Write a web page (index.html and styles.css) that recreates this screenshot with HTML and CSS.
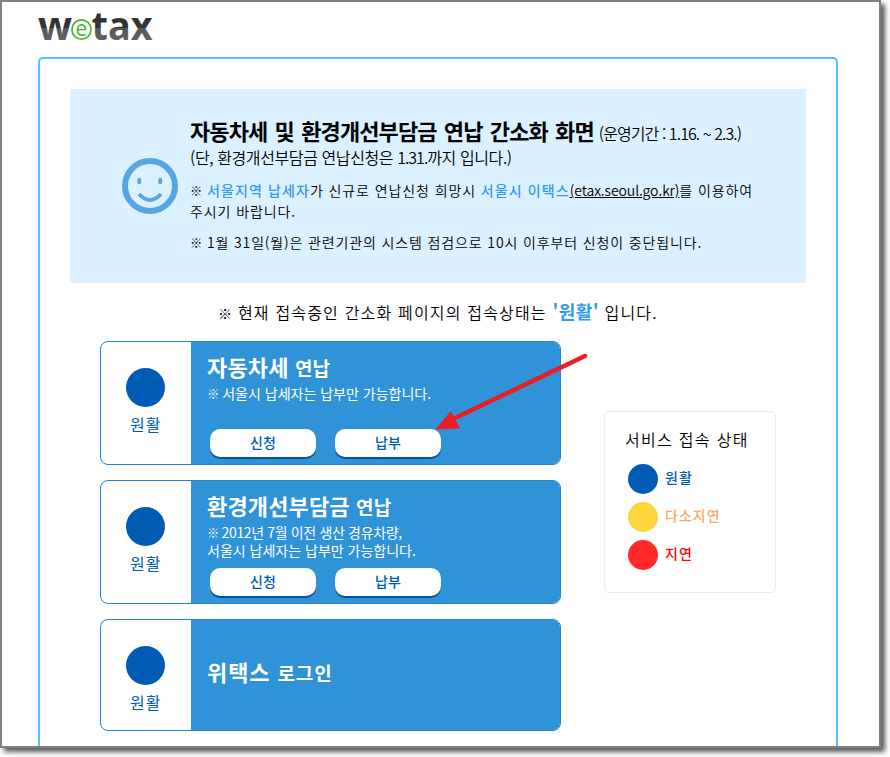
FILE: index.html
```html
<!DOCTYPE html>
<html lang="ko">
<head>
<meta charset="utf-8">
<title>wetax</title>
<link rel="stylesheet" href="styles.css">
</head>
<body>
<div class="window">
  <header class="header">
    <svg class="logo" width="118" height="48" viewBox="0 -6 118 48" role="img" aria-label="wetax">
      <defs>
        <linearGradient id="ink" gradientUnits="userSpaceOnUse" x1="0" y1="0" x2="0" y2="36">
          <stop offset="0" stop-color="#303030"/><stop offset=".55" stop-color="#353535"/>
          <stop offset=".55" stop-color="#555"/><stop offset="1" stop-color="#666"/>
        </linearGradient>
      </defs>
      <g class="logo-ink" fill="url(#ink)">
        <text x="1" y="32" textLength="34" lengthAdjust="spacingAndGlyphs">w</text>
        <text x="54.500" y="32" textLength="61" lengthAdjust="spacingAndGlyphs">tax</text>
      </g>
      <circle cx="44.500" cy="21.500" r="9.600" fill="#fff" stroke="#4db233" stroke-width="1.700"/>
      <text class="logo-e" x="44.500" y="27.500" text-anchor="middle">e</text>
    </svg>
  </header>
  <main class="frame">
    <section class="banner">
      <svg class="smile" width="56" height="56" viewBox="0 0 56 56" fill="none" stroke="#56a7e1">
        <circle cx="28" cy="28" r="25" stroke-width="6"/>
        <path d="M17.300 21.800v2.500M38.200 21.800v2.500" stroke-width="4" stroke-linecap="round"/>
        <path d="M17 36Q28 48 39 36" stroke-width="4"/>
      </svg>
      <div class="banner-text">
        <h1><span class="main">자동차세 및 환경개선부담금 연납 간소화 화면</span><span class="period">(운영기간 : 1.16. ~ 2.3.)</span></h1>
        <p class="limit">(단, 환경개선부담금 연납신청은 <span class="num">1.31.</span>까지 입니다.)</p>
        <p class="note"><span class="mark">※</span> <b>서울지역 납세자</b>가 신규로 연납신청 희망시 <b>서울시 이택스</b><u>(etax.seoul.go.kr)</u>를 이용하여<br>주시기 바랍니다.</p>
        <p class="note system"><span class="mark">※</span> 1월 31일(월)은 관련기관의 시스템 점검으로 10시 이후부터 신청이 중단됩니다.</p>
      </div>
    </section>
    <p class="status"><span class="mark">※</span> 현재 접속중인 간소화 페이지의 접속상태는 <b>'원활'</b> 입니다.</p>
    <div class="columns">
      <div class="cards">
        <article class="card">
          <div class="state"><i class="dot"></i><span>원활</span></div>
          <div class="body">
            <h2>자동차세 <small>연납</small></h2>
            <p><span class="mark">※</span> 서울시 납세자는 납부만 가능합니다.</p>
            <div class="actions"><button>신청</button><button>납부</button></div>
          </div>
        </article>
        <article class="card">
          <div class="state"><i class="dot"></i><span>원활</span></div>
          <div class="body">
            <h2>환경개선부담금 <small>연납</small></h2>
            <p><span class="year"><span class="mark">※</span> 2012년 7월 이전 생산 경유차량,</span><br>서울시 납세자는 납부만 가능합니다.</p>
            <div class="actions"><button>신청</button><button>납부</button></div>
          </div>
        </article>
        <article class="card login">
          <div class="state"><i class="dot"></i><span>원활</span></div>
          <div class="body"><h2>위택스 <small>로그인</small></h2></div>
        </article>
      </div>
      <aside class="legend">
        <h3>서비스 접속 상태</h3>
        <ul>
          <li class="good"><i></i><span>원활</span></li>
          <li class="slow"><i></i><span>다소지연</span></li>
          <li class="late"><i></i><span>지연</span></li>
        </ul>
      </aside>
    </div>
  </main>
  <svg class="arrow" width="160" height="84" viewBox="0 0 160 84">
    <path d="M152 6 20 69" stroke="#ed1c24" stroke-width="4.400" stroke-linecap="round"/>
    <path d="M2 79.500 18 61 27 78.500z" fill="#ed1c24"/>
  </svg>
</div>
</body>
</html>
```
FILE: styles.css
```css
* { box-sizing: border-box; margin: 0; padding: 0; }
html { overflow: hidden; }
body {
  width: 890px;
  height: 757px;
  background: #fff;
  color: #000;
  font-family: "Noto Sans CJK KR", sans-serif;
  overflow: hidden;
}
.window {
  position: relative;
  width: 881px;
  height: 748px;
  border: 2px solid #808080;
  background: #fff;
  box-shadow: 4px 4px 5px rgba(0, 0, 0, .65);
}
.header { height: 55px; padding-left: 35px; }
.logo { display: block; overflow: visible; }
.logo-ink { font: 700 40px "Open Sans", sans-serif; }
.logo-e { font: 400 21px "Open Sans", sans-serif; fill: #4db233; }
.frame {
  width: 800px;
  height: 689px;
  margin-left: 36px;
  padding: 30px 30px 0;
  border: 2px solid #56c1fc;
  border-bottom: 0;
  border-radius: 5px 5px 0 0;
}
.banner {
  display: flex;
  height: 194px;
  width: 736px;
  padding: 28px 0 0 52px;
  gap: 12px;
  background: #dbf1ff;
}
.smile { margin-top: 41px; flex: none; }
.banner-text { white-space: nowrap; }
h1 { display: flex; gap: 5px; height: 27px; line-height: 27px; font-weight: 400; }
.main { font-size: 22px; font-weight: 700; letter-spacing: -.9px; word-spacing: 2px; }
.period { font-size: 16px; font-weight: 350; letter-spacing: -.92px; line-height: 32px; }
.limit { font-size: 16px; font-weight: 350; line-height: 26px; letter-spacing: -.4px; }
.num { letter-spacing: -1px; }
.mark { font-size: .88em; line-height: 1; margin-right: -1px; }
.note { margin-top: 10px; font-size: 14px; font-weight: 350; line-height: 21px; letter-spacing: .9px; }
.note b { color: #3399f3; font-weight: 500; letter-spacing: 1.1px; }
.note u { letter-spacing: -.1px; }
.system { letter-spacing: .86px; }
.status { height: 29px; margin: 14px 0 0 148px; font-size: 16px; font-weight: 350; line-height: 28px; letter-spacing: 1.18px; white-space: nowrap; }
.status b { color: #3399f3; font-size: 18px; letter-spacing: .4px; }
.columns { display: flex; align-items: flex-start; gap: 43px; padding: 15px 0 0 30px; }
.cards { display: grid; gap: 15px; width: 461px; }
.card {
  display: flex;
  height: 124px;
  border: 1px solid #2383c4;
  border-radius: 8px;
  overflow: hidden;
}
.login { height: 112px; }
.state {
  width: 90px;
  padding: 26px 0 0 25px;
  color: #005bb5;
  font-size: 16px;
  letter-spacing: 1px;
  line-height: 24px;
}
.state span { display: block; margin: 5px 0 0 4px; }
.dot { display: block; width: 39px; height: 39px; border-radius: 50%; background: #005bb5; }
.body { flex: 1; padding: 9px 0 0 16px; background: #3092d7; color: #fff; white-space: nowrap; }
h2 { height: 33px; font-size: 22px; line-height: 30px; font-weight: 700; letter-spacing: .15px; }
h2 small { font-size: 19px; }
.body p { height: 45px; font-size: 14px; line-height: 18px; letter-spacing: 0; }
.body .year { letter-spacing: -.35px; }
.login .body { padding-top: 36px; }
.login h2 { letter-spacing: .9px; }
.actions { display: flex; gap: 19px; margin-left: 3px; }
.card button {
  width: 106px;
  height: 28px;
  border: 0;
  border-radius: 10px;
  background: #fff;
  box-shadow: 0 2px 0 #07509a;
  color: #005bb5;
  font: 500 14px/26px "Noto Sans CJK KR", sans-serif;
  padding-bottom: 2px;
}
.legend {
  width: 172px;
  height: 182px;
  margin-top: 70px;
  padding: 15px 20px;
  border: 1px solid #ececec;
  border-radius: 5px;
}
h3 { font-size: 16px; font-weight: 350; line-height: 24px; letter-spacing: 1.3px; white-space: nowrap; }
ul { display: grid; gap: 8px; margin: 13px 0 0 3px; list-style: none; }
li { display: flex; align-items: center; gap: 7px; height: 30px; font-size: 14px; line-height: 26px; font-weight: 500; letter-spacing: 1px; }
li span { padding-bottom: 4px; }
li i { width: 30px; height: 30px; border-radius: 50%; background: currentColor; }
.good { color: #005bb5; }
.slow { color: #ffa565; }
.slow i { background: #ffd53d; }
.late { color: #f00; }
.late i { background: #ff2929; }
.arrow { position: absolute; left: 431px; top: 348px; }
```
